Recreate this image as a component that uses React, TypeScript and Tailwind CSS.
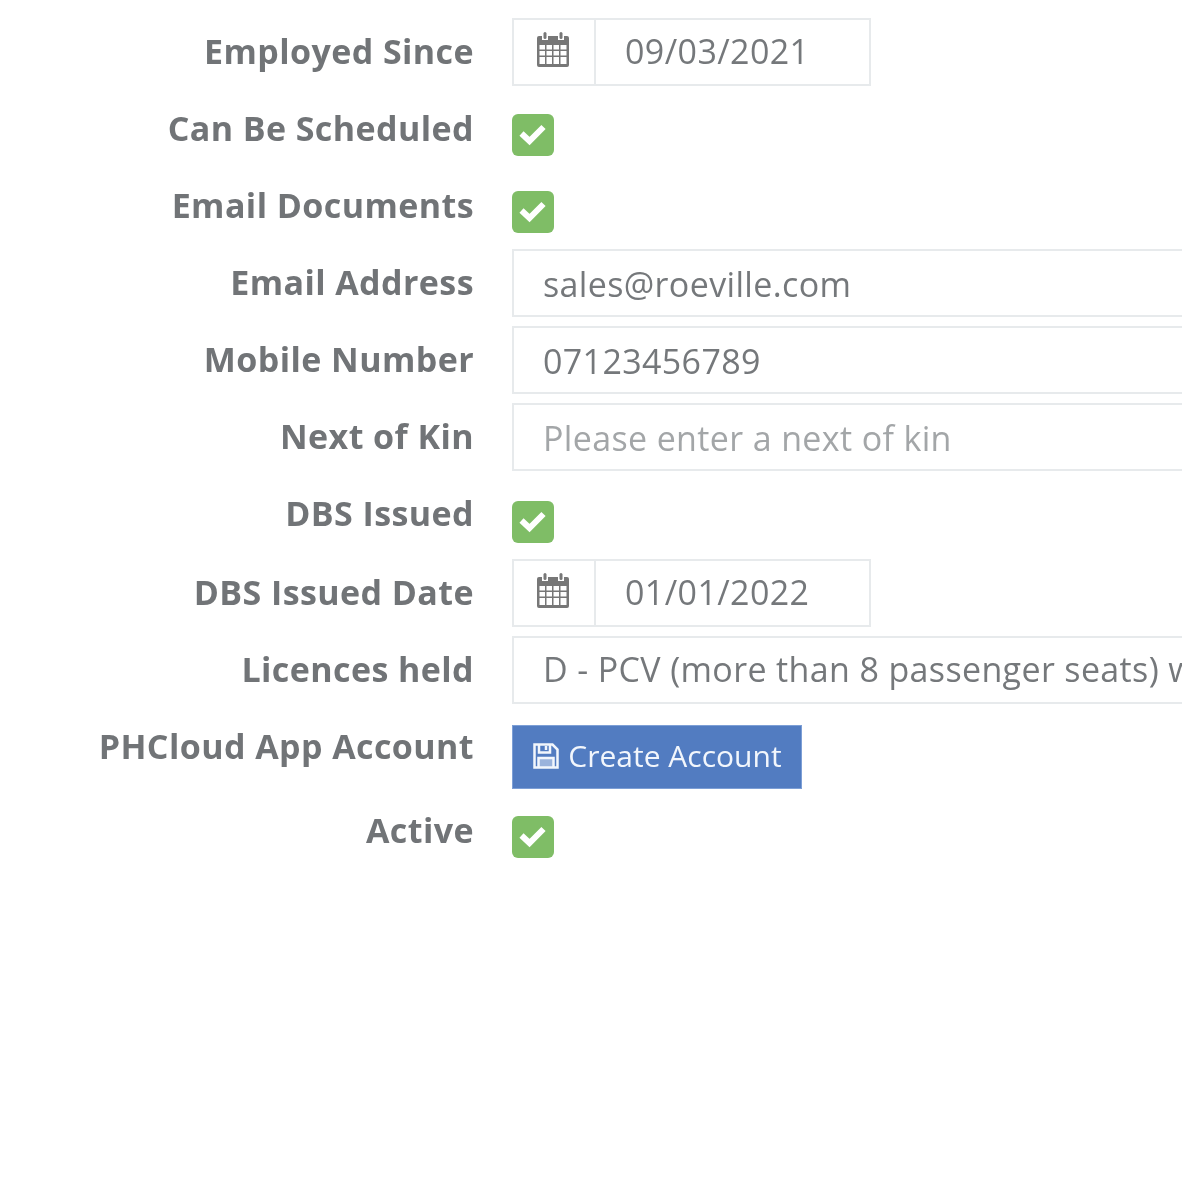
const font = "font-['Open_Sans',sans-serif]";

function CalendarIcon() {
  return (
    <svg width="34" height="36" viewBox="0 0 34 36" className="mr-[2px] mb-[4px] text-[#777]">
      <path
        fill="currentColor"
        fillRule="evenodd"
        d="M3 4h3v4h6V4h10v4h6V4h3a2 2 0 0 1 2 2v27a2 2 0 0 1-2 2H3a2 2 0 0 1-2-2V6a2 2 0 0 1 2-2zM3.500 13v4.500h5.500V13zm7 0v4.500h5.500V13zm7 0v4.500h5.500V13zm7 0v4.500h6V13zM3.500 19v4.500h5.500V19zm7 0v4.500h5.500V19zm7 0v4.500h5.500V19zm7 0v4.500h6V19zM3.500 25v7h5.500v-7zm7 0v7h5.500v-7zm7 0v7h5.500v-7zm7 0v7h6v-7z"
      />
      <rect x="7.500" y="0" width="3" height="7" rx="1.500" fill="currentColor" />
      <rect x="23.500" y="0" width="3" height="7" rx="1.500" fill="currentColor" />
    </svg>
  );
}

function SaveIcon() {
  return (
    <svg width="28" height="28" viewBox="0 0 28 28" fill="none" stroke="currentColor" strokeWidth="2.500">
      <path d="M2.500 2.500h18l5 5v18h-23z" />
      <path d="M7 3v7.500h11V3" />
      <path d="M14 4v4" />
      <path d="M6.500 25v-9h15v9" fill="currentColor" fillOpacity="0.45" />
    </svg>
  );
}

function Row({
  label,
  className,
  children,
}: {
  label: string;
  className: string;
  children: React.ReactNode;
}) {
  return (
    <div className={`flex ${className}`}>
      <label className="flex h-[68px] w-[474px] shrink-0 items-center justify-end pb-[2px] text-[34px] font-bold tracking-[0.42px] text-[#717477]">
        {label}
      </label>
      <div className="ml-[38px] min-w-0 flex-1">{children}</div>
    </div>
  );
}

function DateField({ value }: { value: string }) {
  return (
    <div className="flex h-[68px] w-[359px] border-2 border-[#e7eaec] bg-white">
      <div className="flex w-[82px] shrink-0 items-center justify-center border-r-2 border-[#e7eaec]">
        <CalendarIcon />
      </div>
      <input
        readOnly
        value={value}
        className="w-full min-w-0 pb-[1px] pl-[29px] text-[34px] tracking-[0.4px] text-[#75787b] outline-none"
      />
    </div>
  );
}

function TextField({
  value,
  placeholder,
  className = "pt-[2px]",
}: {
  value?: string;
  placeholder?: string;
  className?: string;
}) {
  return (
    <input
      readOnly
      value={value ?? ""}
      placeholder={placeholder}
      className={`block h-[68px] w-[900px] border-2 border-[#e7eaec] bg-white pl-[29px] text-[34px] tracking-[0.36px] text-[#75787b] outline-none placeholder:text-[#a3a6a8] ${className}`}
    />
  );
}

function Tick() {
  return (
    <div className="flex h-[42px] w-[42px] items-center justify-center rounded-[6px] bg-[#7fbd66]">
      <svg width="42" height="42" viewBox="0 0 42 42" fill="none" stroke="#fff" strokeWidth="6">
        <path d="M9.500 19.500l8 7.500 14-14" />
      </svg>
    </div>
  );
}

export default function App() {
  return (
    <div className={`h-[1182px] w-[1182px] overflow-hidden bg-white pt-[18px] blur-[0.7px] ${font}`}>
      <Row label="Employed Since" className="h-[77px]">
        <DateField value="09/03/2021" />
      </Row>
      <Row label="Can Be Scheduled" className="h-[77px]">
        <div className="pt-[19px]">
          <Tick />
        </div>
      </Row>
      <Row label="Email Documents" className="h-[77px]">
        <div className="pt-[19px]">
          <Tick />
        </div>
      </Row>
      <Row label="Email Address" className="h-[77px]">
        <TextField value="sales@roeville.com" />
      </Row>
      <Row label="Mobile Number" className="h-[77px]">
        <TextField value="07123456789" />
      </Row>
      <Row label="Next of Kin" className="h-[77px]">
        <TextField placeholder="Please enter a next of kin" />
      </Row>
      <Row label="DBS Issued" className="h-[79px]">
        <div className="pt-[21px]">
          <Tick />
        </div>
      </Row>
      <Row label="DBS Issued Date" className="h-[77px]">
        <DateField value="01/01/2022" />
      </Row>
      <Row label="Licences held" className="h-[77px]">
        <TextField value="D - PCV (more than 8 passenger seats) with trailer" className="pb-[2px]" />
      </Row>
      <Row label="PHCloud App Account" className="h-[84px]">
        <div className="pt-[12px]">
          <button className="flex h-[64px] w-[290px] items-center justify-center gap-[8px] border border-[#7d9fd6] bg-[#527cc1] pb-[3px] text-[30px] text-[#f2f6fc]">
            <SaveIcon />
            Create Account
          </button>
        </div>
      </Row>
      <Row label="Active" className="h-[77px]">
        <div className="pt-[19px]">
          <Tick />
        </div>
      </Row>
    </div>
  );
}
